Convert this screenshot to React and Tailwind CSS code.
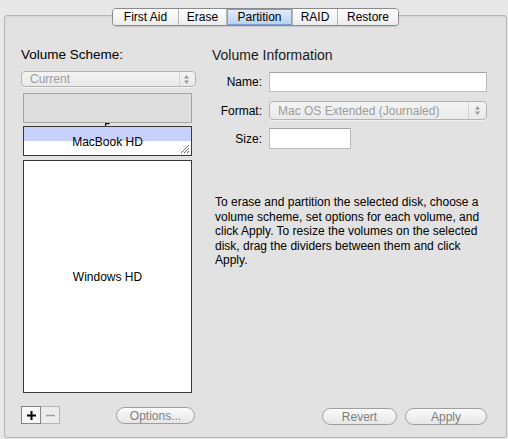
import React from "react";

const font = "font-['Liberation_Sans',Arial,sans-serif]";

function Stepper() {
  return (
    <svg width="7" height="11" viewBox="0 0 7 11" className="block">
      <path d="M3.5 1 L6 4.5 L1 4.5 Z" fill="#9a9a9a" />
      <path d="M3.5 10 L6 6.5 L1 6.5 Z" fill="#9a9a9a" />
    </svg>
  );
}

function Select({ label, className, sepRight }) {
  return (
    <div
      className={`relative flex items-center rounded-[4px] border border-[#b3b3b3] bg-[linear-gradient(to_bottom,#f4f4f4,#e9e9e9)] shadow-[0_1px_0_rgba(255,255,255,0.6)] ${className}`}
    >
      <span className="pl-[8px] text-[12px] leading-none text-[#9c9c9c]">{label}</span>
      <div className="ml-auto flex h-full items-center">
        <div className="h-full w-px bg-[#d2d2d2]" style={{ marginRight: sepRight }} />
        <Stepper />
        <div className="w-[5px]" />
      </div>
    </div>
  );
}

function Pill({ children, className }) {
  return (
    <div
      className={`flex h-[17px] items-center justify-center rounded-full border border-[#9e9e9e] bg-[linear-gradient(to_bottom,#fbfbfb,#e6e6e6)] text-[12px] leading-none text-[#7f7f7f] ${className}`}
    >
      {children}
    </div>
  );
}

function Tab({ children, w, selected, last }) {
  return (
    <div
      className={`flex h-full items-center justify-center text-[12px] leading-none text-black ${
        last ? "" : "border-r border-[#b8b8b8]"
      } ${
        selected
          ? "bg-[linear-gradient(to_bottom,#e4eefc,#b5d0f3)] shadow-[inset_0_0_0_1px_#7d9fd3]"
          : "bg-[linear-gradient(to_bottom,#ffffff,#ececec)]"
      }`}
      style={{ width: w }}
    >
      {children}
    </div>
  );
}

function Grip() {
  return (
    <svg width="11" height="11" viewBox="0 0 11 11" className="absolute bottom-[1px] right-[1px]">
      <path d="M10 2 L2 10 M10 5 L5 10 M10 8 L8 10" stroke="#555" strokeWidth="0.9" />
      <path d="M10.6 2.6 L2.6 10.6 M10.6 5.6 L5.6 10.6" stroke="#fff" strokeWidth="0.6" />
    </svg>
  );
}

export default function App() {
  return (
    <div className={`relative h-[439px] w-[508px] overflow-hidden bg-[#e8e8e8] ${font}`}>
      {/* Panel */}
      <div className="ml-[4px] mt-[15px] flex h-[423px] w-[503px] rounded-[3px] border border-[#b6b6b6] bg-[#e2e2e2] shadow-[inset_0_1px_1px_rgba(0,0,0,0.06)]">
        {/* Left column */}
        <div className="ml-[16px] flex w-[175px] flex-col">
          <div className="mt-[31px] h-[16px] text-[13.5px] leading-[16px] text-black">Volume Scheme:</div>
          <Select label="Current" className="mt-[8px] h-[16px] w-[175px]" sepRight="3px" />
          <div className="ml-[2px] mt-[6px] h-[30px] w-[169px] border border-[#a5a5a5] bg-[#dedede]" />
          <div className="relative ml-[2px] h-[3px] w-[169px]">
            <svg width="5" height="3" viewBox="0 0 5 3" className="absolute left-[82px] top-0">
              <path d="M0.5 3 L0.5 0.6 L4.5 0.6" stroke="#111" strokeWidth="1.2" fill="none" />
            </svg>
          </div>
          <div className="relative ml-[2px] flex h-[30px] w-[169px] items-center justify-center border border-[#3a3a3a] bg-[linear-gradient(to_bottom,#c8d0fd_50%,#ffffff_50%)] text-[12px] leading-none text-black">
            <span className="translate-y-[1px]">MacBook HD</span>
            <Grip />
          </div>
          <div className="ml-[2px] mt-[4px] flex h-[233px] w-[169px] items-center justify-center border border-[#3a3a3a] bg-white text-[12px] leading-none text-black">
            Windows HD
          </div>
          <div className="mt-[13px] flex items-start">
            <div className="flex h-[18px] w-[20px] items-center justify-center border border-[#858585] bg-[#f8f8f8]">
              <svg width="9" height="9" viewBox="0 0 9 9">
                <path d="M4.5 0 V9 M0 4.5 H9" stroke="#000" strokeWidth="2" />
              </svg>
            </div>
            <div className="flex h-[18px] w-[19px] items-center justify-center border border-l-0 border-[#b5b5b5] bg-[#ececec]">
              <svg width="9" height="9" viewBox="0 0 9 9">
                <path d="M0 4.5 H9" stroke="#a0a0a0" strokeWidth="1.6" />
              </svg>
            </div>
            <Pill className="ml-[56px] mt-[1px] w-[79px]">Options...</Pill>
          </div>
        </div>

        {/* Right column */}
        <div className="ml-[16px] flex w-[275px] flex-col">
          <div className="mt-[31px] h-[16px] text-[14px] leading-[16px] text-[#1a1a1a]">Volume Information</div>
          <div className="mt-[9px] flex h-[20px] items-center">
            <div className="w-[50px] text-right text-[12px] leading-none text-black">Name:</div>
            <div className="ml-[7px] h-[20px] w-[218px] border border-[#bdbdbd] border-t-[#a3a3a3] bg-white" />
          </div>
          <div className="mt-[9px] flex h-[19px] items-center">
            <div className="w-[50px] text-right text-[12px] leading-none text-black">Format:</div>
            <Select label="Mac OS Extended (Journaled)" className="ml-[7px] h-[19px] w-[218px]" sepRight="5px" />
          </div>
          <div className="mt-[8px] flex h-[21px] items-center">
            <div className="w-[50px] text-right text-[12px] leading-none text-black">Size:</div>
            <div className="ml-[7px] h-[21px] w-[82px] border border-[#bdbdbd] border-t-[#a3a3a3] bg-white" />
          </div>
          <p className="ml-[3px] mt-[46px] w-[272px] text-[12px] leading-[14.5px] text-black">
            To erase and partition the selected disk, choose a volume scheme, set options for each volume, and click
            Apply. To resize the volumes on the selected disk, drag the dividers between them and click Apply.
          </p>
          <div className="mb-[12px] mt-auto flex">
            <Pill className="ml-[110px] w-[76px]">Revert</Pill>
            <Pill className="ml-[8px] w-[83px]">Apply</Pill>
          </div>
        </div>
      </div>

      {/* Tab bar overlapping panel top */}
      <div className="absolute left-[112px] top-[8px] flex h-[18px] w-[287px] overflow-hidden rounded-[4px] border border-[#8a8a8a] shadow-[0_1px_1px_rgba(0,0,0,0.12)]">
        <Tab w="66px">First Aid</Tab>
        <Tab w="48px">Erase</Tab>
        <Tab w="66px" selected>Partition</Tab>
        <Tab w="45px">RAID</Tab>
        <Tab w="60px" last>Restore</Tab>
      </div>
    </div>
  );
}
